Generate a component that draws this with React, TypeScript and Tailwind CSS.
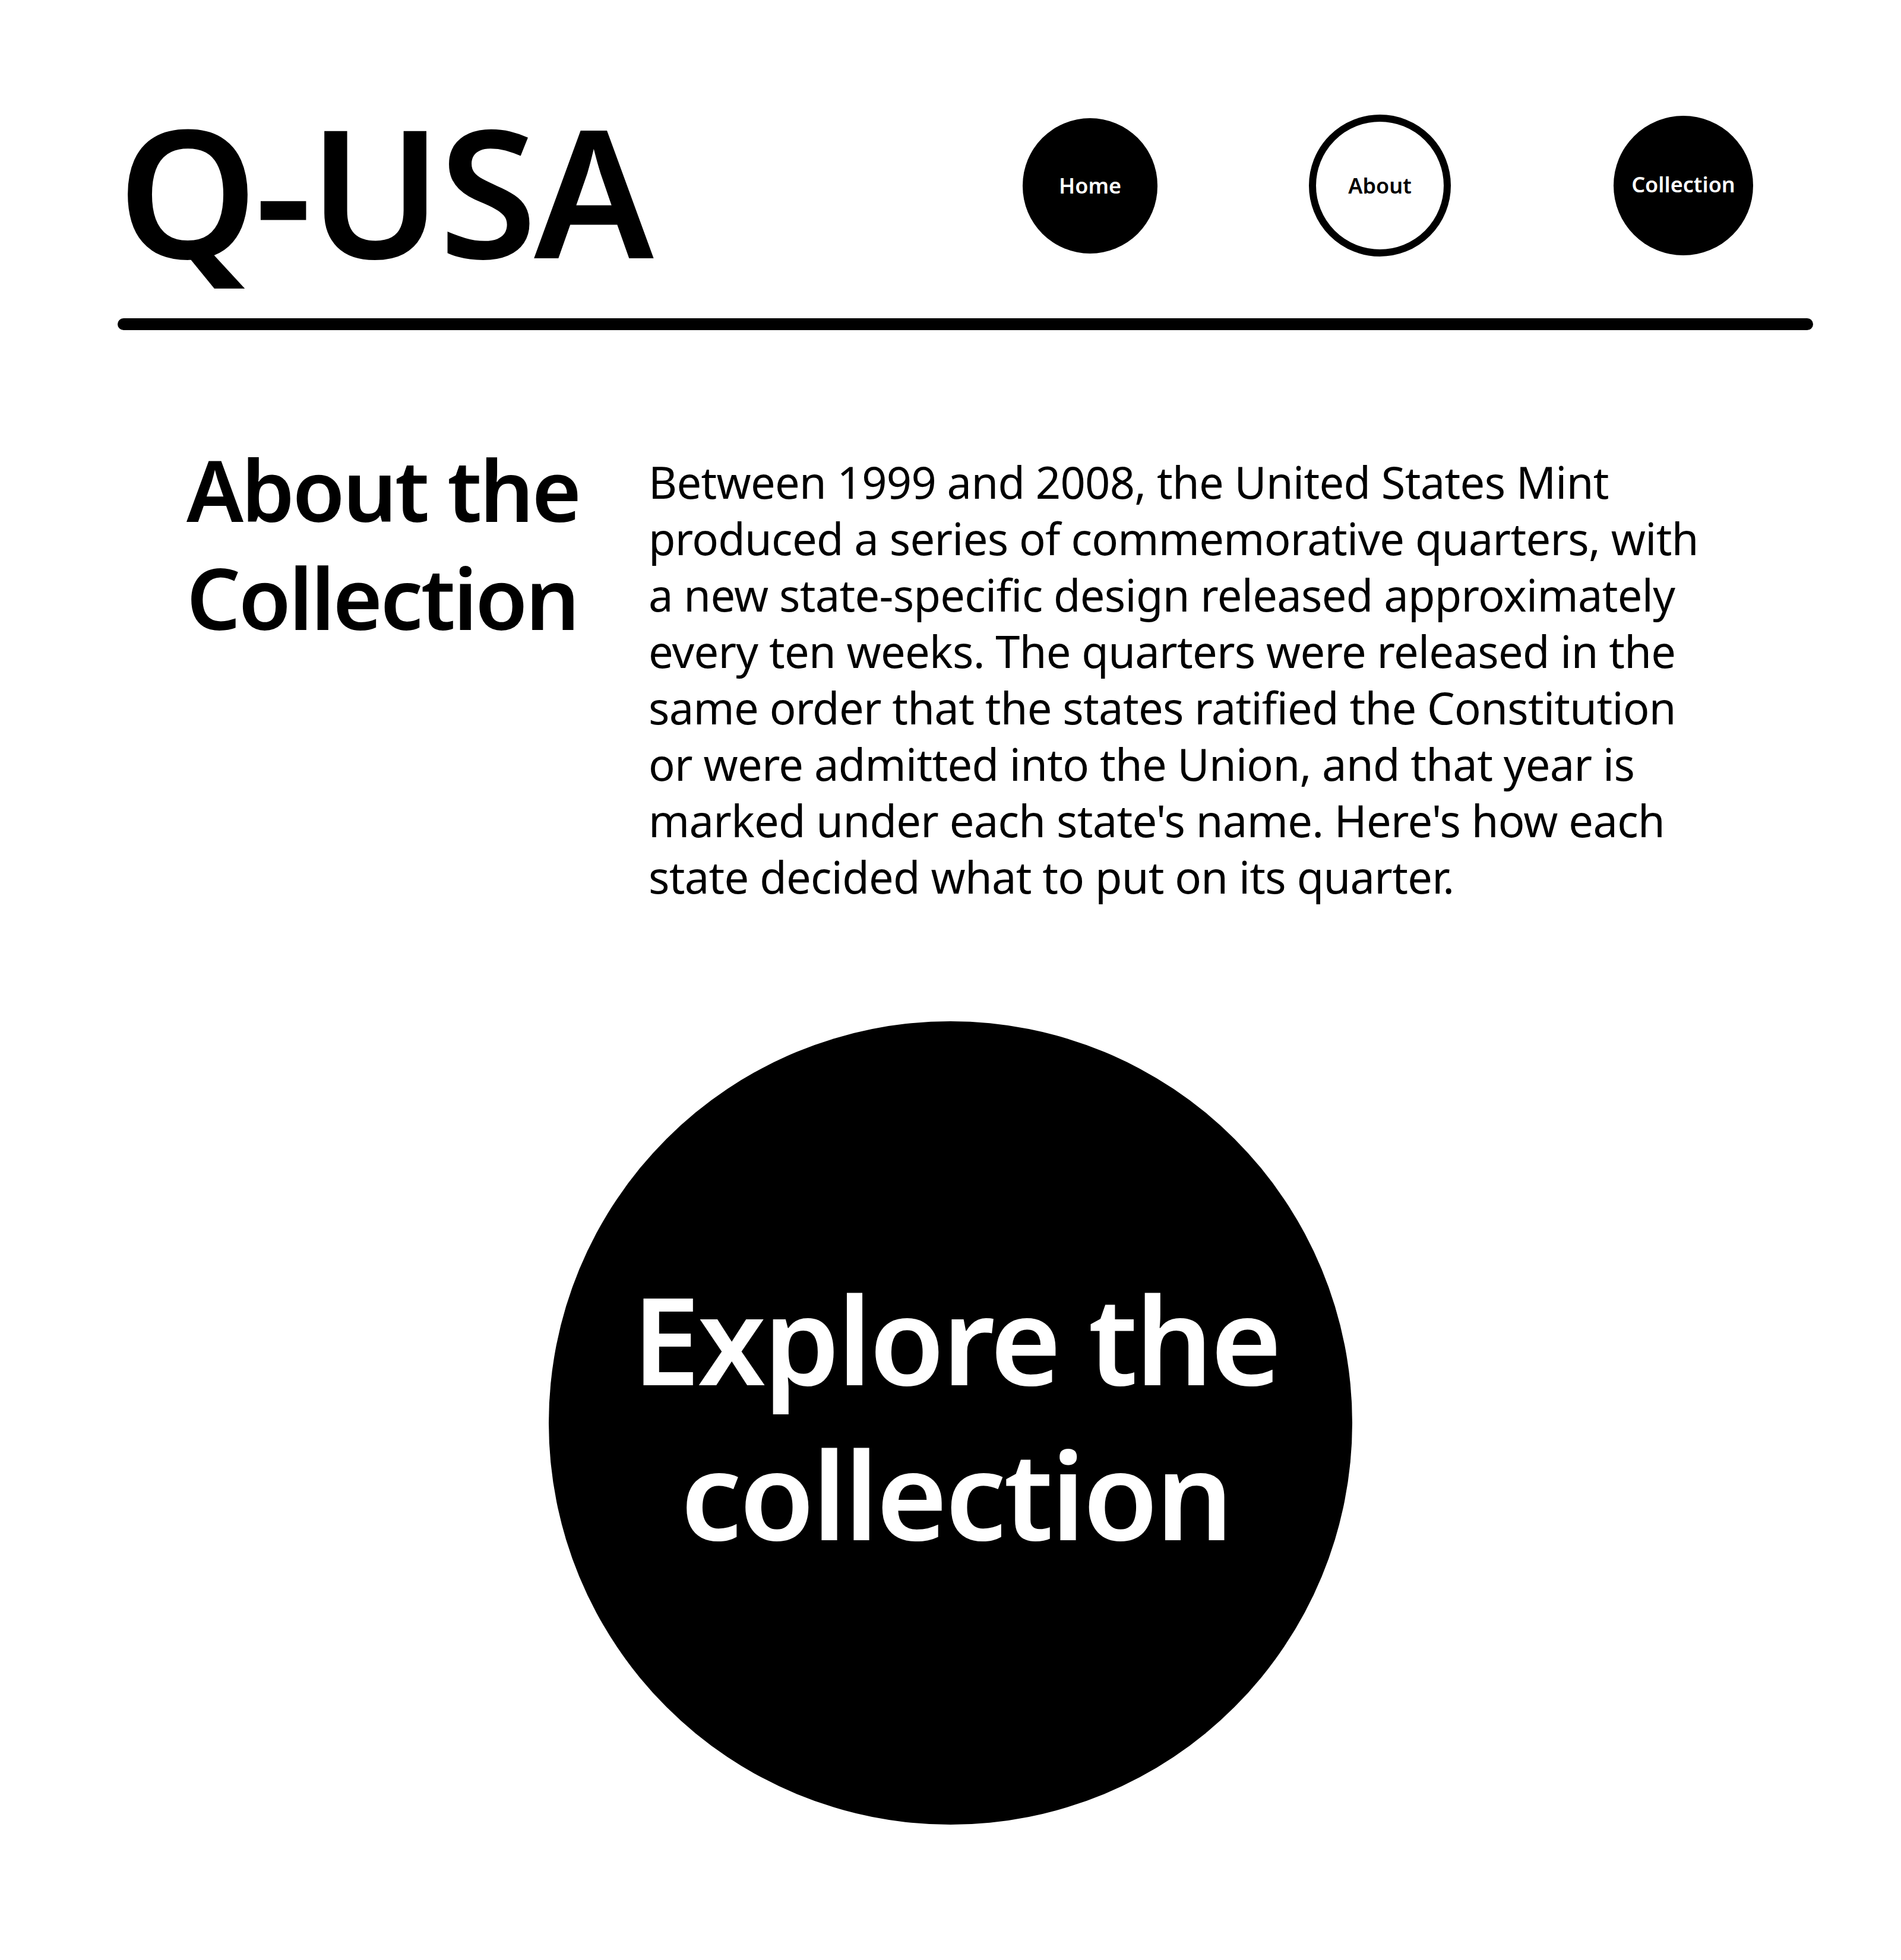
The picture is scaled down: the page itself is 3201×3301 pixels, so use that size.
import React from "react";

const font = { fontFamily: '"Noto Sans", "Open Sans", sans-serif' };

function NavCircle({ label, outlined, size, className }: { label: string; outlined?: boolean; size: string; className?: string }) {
  return (
    <a
      href="#"
      className={
        (outlined
          ? "border-[12px] border-black bg-white text-black "
          : "bg-black text-white ") +
        "flex items-center justify-center rounded-full text-[36px] font-semibold leading-none " +
        size +
        " " +
        (className ?? "")
      }
    >
      {label}
    </a>
  );
}

export default function App() {
  return (
    <div className="w-full bg-white text-black" style={font}>
      <header className="flex items-start pl-[198px] pr-[148px] pt-[169px]">
        <h1 className="text-[300px] font-semibold leading-[300px] tracking-[-5px]">Q-USA</h1>
        <nav className="ml-auto mr-[101px] mt-[24px] flex items-center">
          <NavCircle label="Home" size="h-[228px] w-[227px]" />
          <NavCircle label="About" outlined size="h-[239px] w-[239px]" className="ml-[255px]" />
          <NavCircle label="Collection" size="h-[235px] w-[235px]" className="ml-[274px] pb-[4px]" />
        </nav>
      </header>
      <div className="mx-[198px] mr-[148px] mt-[67px] h-[20px] rounded-full bg-black" />

      <section className="mt-[177px] flex items-start pl-[314px]">
        <h2 className="w-[778px] shrink-0 text-[143px] font-semibold leading-[182px] tracking-[-3.5px]">
          About the
          <br />
          Collection
        </h2>
        <p className="mt-[31px] text-[74px] font-normal leading-[95px] tracking-[-0.7px] whitespace-nowrap">
          Between 1999 and 2008, the United States Mint
          <br />
          produced a series of commemorative quarters, with
          <br />
          a new state-specific design released approximately
          <br />
          every ten weeks. The quarters were released in the
          <br />
          same order that the states ratified the Constitution
          <br />
          or were admitted into the Union, and that year is
          <br />
          marked under each state's name. Here's how each
          <br />
          state decided what to put on its quarter.
        </p>
      </section>

      <div className="mt-[196px] flex justify-center pb-[221px]">
        <a
          href="#"
          className="flex h-[1353px] w-[1353px] items-center justify-center rounded-full bg-black pb-[26px] pl-[18px] text-center text-[205px] font-semibold leading-[261px] tracking-[-4px] text-white"
        >
          Explore the
          <br />
          collection
        </a>
      </div>
    </div>
  );
}
